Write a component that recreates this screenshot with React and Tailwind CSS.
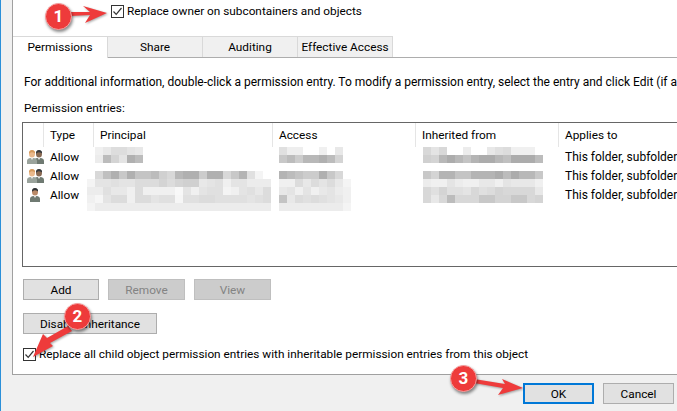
import React from 'react';

const tabs = ['Permissions', 'Share', 'Auditing', 'Effective Access'];

const columns = [
  { label: 'Type', width: 'w-[50px]' },
  { label: 'Principal', width: 'w-[179px]' },
  { label: 'Access', width: 'w-[143px]' },
  { label: 'Inherited from', width: 'w-[143px]' },
  { label: 'Applies to', width: 'w-[143px]' },
];

const entries = [
  { group: true },
  { group: true },
  { group: false },
];

// blurred out names, every number is one 8px cell (grey level), 0 = nothing there
const mosaics = [
  {
    x: 72, y: 0,
    cells: [
      [0xf0, 0xe8, 0xdd, 0xdd, 0xe4, 0xe8],
      [0xec, 0xbc, 0xd4, 0xe4, 0xb0, 0xbc],
    ],
  },
  {
    x: 64, y: 24,
    cells: [
      [0, 0xd8, 0xc0, 0xb0, 0xc8, 0xb0, 0xc4, 0xc4, 0xbc, 0xd0, 0xd8, 0xb8, 0xb0, 0xb0, 0xcc, 0xb0, 0xb0, 0xd8, 0xc8, 0xb4, 0xe0, 0xf4, 0],
      [0xf4, 0xe4, 0xe4, 0xe0, 0xe4, 0xe4, 0xdc, 0xdc, 0xdc, 0xd4, 0xdc, 0xd4, 0xd0, 0xd0, 0xe8, 0xe4, 0xe0, 0xf0, 0xe4, 0xe4, 0xec, 0xec, 0xec],
      [0xec, 0xec, 0xe0, 0xe8, 0xe8, 0xf0, 0xdc, 0xf0, 0xf0, 0xf0, 0xf0, 0xf8, 0xe4, 0xf0, 0xe4, 0xe0, 0xe0, 0xf4, 0xf0, 0xe4, 0xe0, 0xe8, 0xdc],
      [0xf0, 0xf6, 0xe4, 0xdc, 0xdc, 0xf0, 0xdc, 0xdc, 0xe4, 0xe0, 0xe0, 0xf6, 0xe0, 0xe0, 0xdc, 0xdc, 0xe0, 0xe0, 0xe0, 0xe0, 0xe4, 0xe0, 0xdc],
      [0xf4, 0xec, 0xec, 0xec, 0xec, 0xec, 0xec, 0xec, 0xec, 0xec, 0xec, 0xec, 0xec, 0xec, 0xec, 0xec, 0xec, 0xec, 0xec, 0xec, 0xec, 0xec, 0xec],
    ],
  },
  {
    x: 256, y: 0,
    cells: [
      [0xe0, 0xee, 0xee, 0, 0, 0xf0, 0, 0xe8],
      [0xc8, 0xbc, 0xcc, 0xb8, 0xb8, 0xb0, 0xbc, 0xd4],
    ],
  },
  {
    x: 256, y: 24,
    cells: [
      [0xb4, 0xbc, 0xc4, 0xcc, 0xcc, 0xb0, 0xc8, 0xd8, 0],
      [0xf0, 0xf0, 0xdc, 0xe8, 0xdc, 0xe4, 0xdc, 0xe8, 0xf4],
      [0xe8, 0xe4, 0xf0, 0xe4, 0xf0, 0xe8, 0xe4, 0xec, 0xf0],
      [0xc4, 0xe8, 0xdc, 0xe0, 0xdc, 0xe0, 0xe4, 0xe8, 0xf0],
      [0xec, 0xec, 0xec, 0xec, 0xec, 0xec, 0xec, 0xec, 0xf4],
    ],
  },
  {
    x: 400, y: 0,
    cells: [
      [0xd8, 0xe4, 0xd8, 0, 0, 0xec, 0, 0, 0xe8, 0xe0, 0xdc, 0xf0, 0xf0, 0xf0, 0],
      [0xd0, 0xd4, 0xb8, 0xac, 0xb8, 0xc4, 0xb4, 0xac, 0xac, 0xb8, 0xc0, 0xac, 0xac, 0xac, 0xbc],
    ],
  },
  {
    x: 400, y: 24,
    cells: [
      [0xc8, 0xd4, 0xb4, 0xb4, 0xc4, 0xc4, 0xb4, 0xb4, 0xb4, 0xac, 0xbc, 0xac, 0xb8, 0xb8, 0xc8],
      [0xec, 0xf0, 0xf0, 0xe4, 0xec, 0xf0, 0xf0, 0xe8, 0xe8, 0xf0, 0xe4, 0xe8, 0xe8, 0xe8, 0xf0],
      [0xd8, 0xe0, 0xd4, 0xe0, 0xe0, 0xe4, 0xd8, 0xe0, 0xdc, 0xd4, 0xd8, 0xd8, 0xd8, 0xd8, 0xe8],
      [0xd8, 0xe8, 0xd8, 0xbc, 0xd8, 0xd8, 0xd8, 0xc8, 0xc8, 0xd4, 0xd4, 0xc8, 0xc8, 0xd8, 0xd4],
    ],
  },
];

function Mosaic({ x, y, cells }) {
  return (
    <div className="absolute" style={{ left: x, top: y }}>
      {cells.map((row, r) => (
        <div key={r} className="flex">
          {row.map((v, c) => (
            <div
              key={c}
              className="w-[8px] h-[8px]"
              style={{ background: v ? `rgb(${v},${v},${v})` : 'transparent' }}
            />
          ))}
        </div>
      ))}
    </div>
  );
}

function Person({ x, skin, hair, body }) {
  return (
    <g transform={`translate(${x} 0)`}>
      <path d="M0 15 L0 12 Q0 9.5 3 9 L7 9 Q10 9.5 10 12 L10 15 Z" fill={body} />
      <ellipse cx="5" cy="5" rx="3" ry="3.6" fill={skin} />
      <path d="M2 5 Q1.6 1 5 1 Q8.4 1 8 4.6 Q6 3 4 3.4 Q2.6 3.6 2 5 Z" fill={hair} />
      <path d="M3.6 9 L5 11 L6.4 9 Z" fill="#e8e8e8" />
    </g>
  );
}

function UserIcon({ group }) {
  return (
    <svg width="17" height="16" viewBox="0 0 17 16" className="shrink-0">
      {group ? (
        <>
          <Person x={7} skin="#8a6a52" hair="#33383c" body="#6f7a72" />
          <Person x={0} skin="#eab98c" hair="#d69a5c" body="#9aa39c" />
        </>
      ) : (
        <Person x={3} skin="#b98a68" hair="#2e3236" body="#6f7a72" />
      )}
    </svg>
  );
}

function Checkbox() {
  return (
    <span className="w-[13px] h-[13px] border border-[#333] bg-white flex items-center justify-center shrink-0">
      <svg width="11" height="11" viewBox="0 0 11 11">
        <path d="M1.5 5.5 L4.2 8.4 L9.5 2" fill="none" stroke="#333" strokeWidth="1.2" />
      </svg>
    </span>
  );
}

function WinButton({ children, width, disabled, primary }) {
  let look = 'border border-[#adadad] bg-[#e1e1e1] text-black';
  if (disabled) look = 'border border-[#bfbfbf] bg-[#cccccc] text-[#838383]';
  if (primary) look = 'border-2 border-[#0078d7] bg-[#e1e1e1] text-black';
  return (
    <button className={`${width} h-[21px] flex items-center justify-center whitespace-nowrap ${look}`}>
      {children}
    </button>
  );
}

function Badge({ n, className }) {
  return (
    <div
      className={`absolute w-[27px] h-[27px] rounded-full bg-[#ee3b3b] border border-[#f6a0a0] shadow-[1px_2px_3px_rgba(0,0,0,0.45)] flex items-center justify-center text-white font-bold text-[17px] leading-none ${className}`}
    >
      {n}
    </div>
  );
}

export default function App() {
  return (
    <div className="relative w-[677px] h-[411px] overflow-hidden bg-[#f0f0f0] border-l border-[#2b90d9] text-[11.8px] leading-[16px] text-black font-['Roboto',sans-serif]">
      <div className="ml-[11px] w-[700px] h-[375px] bg-white border-l border-b border-[#a0a0a0]">
        {/* owner checkbox */}
        <div className="h-[36px] pl-[98px] pt-[5px] flex items-start gap-[3px] whitespace-nowrap">
          <Checkbox />
          <span className="leading-[13px]">Replace owner on subcontainers and objects</span>
        </div>

        {/* tabs */}
        <div className="h-[22px] flex border-b border-[#adadad]">
          {tabs.map((tab, i) => (
            <div
              key={tab}
              className={
                i === 0
                  ? 'w-[95px] h-[22px] pb-[2px] bg-white border-t border-r border-[#d9d9d9] flex items-center justify-center'
                  : 'w-[95px] h-[21px] pb-[1px] bg-[#f0f0f0] border-t border-r border-[#d9d9d9] flex items-center justify-center whitespace-nowrap'
              }
            >
              {tab}
            </div>
          ))}
        </div>

        {/* tab body */}
        <div className="pl-[9px]">
          <p className="pl-[2px] pt-[16px] h-[42px] whitespace-nowrap text-[12px]">
            For additional information, double-click a permission entry. To modify a permission entry, select the entry and click Edit (if available).
          </p>
          <p className="pl-[2px] h-[22px]">Permission entries:</p>

          {/* list */}
          <div className="w-[720px] h-[145px] border border-[#666]">
            <div className="h-[24px] flex">
              <div className="w-[21px] border-r border-[#e5e5e5]" />
              {columns.map((col) => (
                <div key={col.label} className={`${col.width} pl-[6px] pt-[4px] border-r border-[#e5e5e5] shrink-0 whitespace-nowrap`}>
                  {col.label}
                </div>
              ))}
            </div>
            <div className="relative">
              {mosaics.map((m, i) => (
                <Mosaic key={i} {...m} />
              ))}
              {entries.map((entry, i) => (
                <div key={i} className="relative h-[19px] pl-[4px] flex items-center">
                  <UserIcon group={entry.group} />
                  <span className="ml-[6px] w-[515px] shrink-0 pt-[1px]">Allow</span>
                  <span className="whitespace-nowrap pt-[1px] text-[12px]">This folder, subfolders and files</span>
                </div>
              ))}
            </div>
          </div>

          <div className="ml-[1px] pt-[12px] flex gap-[9px]">
            <WinButton width="w-[76px]">Add</WinButton>
            <WinButton width="w-[77px]" disabled>Remove</WinButton>
            <WinButton width="w-[77px]" disabled>View</WinButton>
          </div>
          <div className="ml-[1px] pt-[13px]">
            <WinButton width="w-[134px]">Disable inheritance</WinButton>
          </div>
          <div className="ml-[1px] pt-[14px] flex items-start gap-[3px] whitespace-nowrap">
            <Checkbox />
            <span className="leading-[13px]">Replace all child object permission entries with inheritable permission entries from this object</span>
          </div>
        </div>
      </div>

      <div className="pt-[8px] pr-[3px] flex justify-end gap-[9px]">
        <WinButton width="w-[71px]" primary>OK</WinButton>
        <WinButton width="w-[71px]">Cancel</WinButton>
      </div>

      {/* red callouts drawn on top of the dialog */}
      <svg width="677" height="411" viewBox="0 0 677 411" className="absolute left-[-1px] top-0 pointer-events-none drop-shadow-[1px_1px_1px_rgba(0,0,0,0.35)]">
        <polygon points="70,12 90,12 83,6 107,13 85,23 90,15 70,16" fill="#ee3b3b" />
        <polygon points="68,326 72,331 50,343 53,346 33,357 43,334 47,338" fill="#ee3b3b" />
        <polygon points="474,379 505,384 502,379 523,388 498,395 503,388 474,383" fill="#ee3b3b" />
      </svg>
      <Badge n="1" className="left-[44px] top-[3px]" />
      <Badge n="2" className="left-[63px] top-[303px]" />
      <Badge n="3" className="left-[449px] top-[365px]" />
    </div>
  );
}
